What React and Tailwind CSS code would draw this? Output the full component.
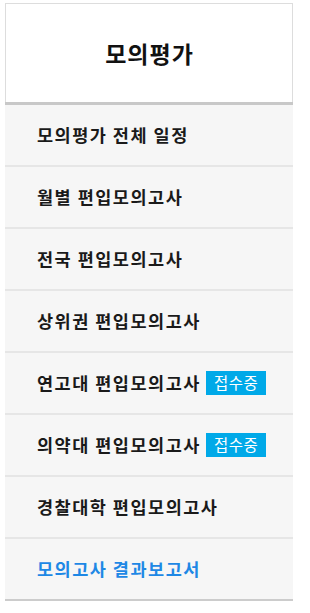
import React from "react";

const items = [
  { label: "모의평가 전체 일정" },
  { label: "월별 편입모의고사" },
  { label: "전국 편입모의고사" },
  { label: "상위권 편입모의고사" },
  { label: "연고대 편입모의고사", badge: "접수중" },
  { label: "의약대 편입모의고사", badge: "접수중" },
  { label: "경찰대학 편입모의고사" },
  { label: "모의고사 결과보고서", blue: true },
];

export default function App() {
  return (
    <div
      className="w-[310px] h-[613px] bg-white pt-[3px] pl-[5px]"
      style={{ fontFamily: '"Noto Sans CJK KR", "Noto Sans", sans-serif' }}
    >
      <div className="w-[288px] flex flex-col">
        <div className="h-[99px] border border-b-0 border-[#dddddd] flex items-center justify-center">
          <h1 className="text-[23px] font-bold text-[#111111] leading-none tracking-[1px] pl-[1px]">모의평가</h1>
        </div>
        <div className="h-[3px] bg-[#c8c8c8]" />
        {items.map((it, i) => (
          <div
            key={i}
            className={
              "h-[62px] bg-[#f6f6f6] flex items-center pl-[32px] " +
              (i === items.length - 1
                ? "border-b-2 border-[#cccccc]"
                : "border-b-2 border-[#e6e6e6]")
            }
          >
            <span
              className={
                "text-[17.5px] font-bold leading-none tracking-[1.5px] " +
                (it.blue ? "text-[#1e88e5]" : "text-[#1a1a1a]")
              }
            >
              {it.label}
            </span>
            {it.badge && (
              <span className="ml-[5px] h-[24px] px-[8px] bg-[#00a9e8] text-white text-[15.5px] tracking-[0.5px] flex items-center leading-none">
                {it.badge}
              </span>
            )}
          </div>
        ))}
      </div>
    </div>
  );
}
